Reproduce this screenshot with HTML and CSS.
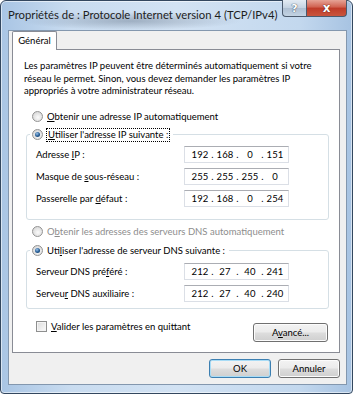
FILE: index.html
```html
<html>

<head>
  <meta charset="utf-8">
  <meta name="viewport" content="width=device-width, initial-scale=1">
  <link rel="stylesheet" href="styles.css">
</head>

<body>
  <div class="window">
    <div class="titlebar">
      <span class="title">Propriétés de : Protocole Internet version 4 (TCP/IPv4)</span>
      <div class="caption">
        <span class="cap-btn help">?</span>
        <span class="cap-btn close">x</span>
      </div>
    </div>

    <div class="client">
      <div class="tabs"><span class="tab">Général</span></div>

      <div class="panel">
        <p class="intro">Les paramètres IP peuvent être déterminés automatiquement si votre<br>
          réseau le permet. Sinon, vous devez demander les paramètres IP<br>
          appropriés à votre administrateur réseau.</p>

        <div class="option first"><span class="radio"></span><span><u>O</u>btenir une adresse IP automatiquement</span></div>

        <fieldset class="group group-ip">
          <legend class="option"><span class="radio on"></span><span class="focus"><u>U</u>tiliser l'adresse IP suivante :</span></legend>
          <div class="fields">
            <span>Adresse <u>I</u>P :</span>
            <span class="ip"><span>192</span><i>.</i><span>168</span><i>.</i><span>0</span><i>.</i><span>151</span></span>
            <span>Masque de <u>s</u>ous-réseau :</span>
            <span class="ip"><span>255</span><i>.</i><span>255</span><i>.</i><span>255</span><i>.</i><span>0</span></span>
            <span>Passerelle par <u>d</u>éfaut :</span>
            <span class="ip"><span>192</span><i>.</i><span>168</span><i>.</i><span>0</span><i>.</i><span>254</span></span>
          </div>
        </fieldset>

        <div class="option disabled"><span class="radio"></span><span>O<u>b</u>tenir les adresses des serveurs DNS automatiquement</span></div>

        <fieldset class="group group-dns">
          <legend class="option"><span class="radio on"></span><span>Uti<u>l</u>iser l'adresse de serveur DNS suivante :</span></legend>
          <div class="fields">
            <span>Serveur DNS pré<u>f</u>éré :</span>
            <span class="ip"><span>212</span><i>.</i><span>27</span><i>.</i><span>40</span><i>.</i><span>241</span></span>
            <span>Serveu<u>r</u> DNS auxiliaire :</span>
            <span class="ip"><span>212</span><i>.</i><span>27</span><i>.</i><span>40</span><i>.</i><span>240</span></span>
          </div>
        </fieldset>

        <div class="panel-foot">
          <div class="option check-row"><span class="checkbox"></span><span><u>V</u>alider les paramètres en quittant</span></div>
          <button class="btn advanced">A<u>v</u>ancé...</button>
        </div>
      </div>

      <div class="actions">
        <button class="btn default">OK</button>
        <button class="btn">Annuler</button>
      </div>
    </div>
  </div>
</body>

</html>
```

FILE: styles.css
```css
  body {
    margin: 0;
    background: #ffffff;
    color: #000000;
    font-family: "Lato", "Open Sans", sans-serif;
    font-size: 9.5px;
  }

  u {
    text-decoration-thickness: 1px;
    text-underline-offset: 1px;
  }

  /* window frame */
  .window {
    width: 353px;
    height: 394px;
    box-sizing: border-box;
    border: 1px solid #33475f;
    border-radius: 6px 6px 4px 4px;
    padding: 0 5px 8px 7px;
    display: flex;
    flex-direction: column;
    background:
      radial-gradient(ellipse 110px 9px at 130px 20px, rgba(70, 85, 105, 0.35), transparent),
      linear-gradient(to right, #a9c5e4, #c9dcf0 20%, #d2e2f3 50%, #c3d8ee 85%, #a7c3e2);
    box-shadow: inset 0 0 0 1px rgba(255, 255, 255, 0.55);
  }

  .titlebar {
    height: 29px;
    display: flex;
    justify-content: space-between;
    align-items: flex-start;
  }

  .title {
    margin-top: 7px;
    font-size: 11.3px;
    line-height: 14px;
    color: #1e1e1e;
  }

  .caption {
    display: flex;
    margin-top: -1px;
  }

  .cap-btn {
    height: 17px;
    box-sizing: border-box;
    border: 1px solid #4b5a6d;
    border-top: none;
    display: flex;
    align-items: center;
    justify-content: center;
    color: #ffffff;
    font-family: "DejaVu Sans", sans-serif;
    font-weight: bold;
  }

  .help {
    width: 24px;
    border-radius: 0 0 0 4px;
    border-right: none;
    font-size: 11px;
    background: linear-gradient(to bottom, #e3ebf3, #c4d2e1 50%, #aebfd2 51%, #c3d3e3);
    text-shadow: 0 0 1px #3b4a5c, 0 0 1px #3b4a5c;
  }

  .close {
    width: 41px;
    border-radius: 0 0 4px 0;
    font-size: 12px;
    background: linear-gradient(to bottom, #e6a396, #d0604f 45%, #bf3a28 50%, #c9553d);
    text-shadow: 0 0 1px #5a1a10, 0 0 1px #5a1a10;
  }

  /* dialog body */
  .client {
    flex: 1;
    background: #f0f0f0;
    border: 1px solid #8397ae;
    padding: 0 6px 0 3px;
    display: flex;
    flex-direction: column;
  }

  .tabs {
    display: flex;
    height: 18px;
  }

  .tab {
    position: relative;
    z-index: 1;
    width: 45px;
    height: 19px;
    box-sizing: border-box;
    border: 1px solid #898c95;
    border-bottom: none;
    border-radius: 2px 2px 0 0;
    background: #ffffff;
    text-align: center;
    line-height: 18px;
  }

  .panel {
    height: 304px;
    box-sizing: border-box;
    border: 1px solid #898c95;
    background: #ffffff;
    padding: 0 10px 0 11px;
  }

  .intro {
    margin: 10px 0 0;
    line-height: 12.5px;
  }

  .option {
    display: flex;
    align-items: center;
    gap: 4px;
    height: 14px;
  }

  .option.first {
    margin: 12px 0 0 8px;
  }

  .option.disabled {
    margin: 5px 0 0 8px;
    color: #8d8d8d;
  }

  .radio {
    width: 11px;
    height: 11px;
    box-sizing: border-box;
    border-radius: 50%;
    border: 1px solid #939393;
    background: radial-gradient(circle at 55% 60%, #fbfbfb, #d7d7d7 80%);
    display: flex;
    align-items: center;
    justify-content: center;
  }

  .radio.on::after {
    content: "";
    width: 5px;
    height: 5px;
    border-radius: 50%;
    background: radial-gradient(circle at 40% 35%, #9cc3ea, #235a92 55%, #0f365f);
  }

  .focus {
    outline: 1px dotted #000000;
    outline-offset: 0;
    padding: 0 1px;
    line-height: 12px;
  }

  .group {
    margin: 4px 0 0 2px;
    border: 1px solid #d5dfe5;
    border-radius: 3px;
    padding: 4px 0 12px 9px;
  }

  .group-dns {
    margin-top: 5px;
    padding: 5px 0 6px 9px;
  }

  .group legend {
    margin-left: -6px;
    padding: 0 4px 0 2px;
  }

  .fields {
    display: grid;
    grid-template-columns: 148px 105px;
    grid-auto-rows: 17px;
    row-gap: 5px;
    align-items: center;
  }

  .ip {
    height: 17px;
    box-sizing: border-box;
    border: 1px solid #dbdfe6;
    border-top-color: #abadb3;
    padding-left: 5px;
    display: flex;
    align-items: center;
    letter-spacing: 0.2px;
  }

  .ip span {
    width: 20px;
    text-align: center;
  }

  .ip i {
    width: 5px;
    font-style: normal;
    text-align: center;
  }

  .panel-foot {
    margin: 11px 0 0;
    display: flex;
    justify-content: space-between;
    align-items: flex-start;
  }

  .check-row {
    margin-left: 12px;
  }

  .checkbox {
    width: 11px;
    height: 11px;
    box-sizing: border-box;
    border: 1px solid #8e8f8f;
    background: linear-gradient(135deg, #dcdcdc, #fafafa);
    box-shadow: inset 0 0 0 1px #f4f4f4;
  }

  /* buttons */
  .btn {
    height: 19px;
    box-sizing: border-box;
    border: 1px solid #707070;
    border-radius: 3px;
    background: linear-gradient(to bottom, #f3f3f3, #ebebeb 48%, #dddddd 52%, #cfcfcf);
    box-shadow: inset 0 0 0 1px #fcfcfc;
    font-family: inherit;
    font-size: 9.5px;
    color: #000000;
    padding: 0;
  }

  .advanced {
    width: 75px;
    margin: 3px 1px 0 0;
  }

  .actions {
    display: flex;
    justify-content: flex-end;
    gap: 7px;
    margin-top: 6px;
  }

  .actions .btn {
    width: 62px;
  }

  .btn.default {
    border-color: #3c7fb1;
    box-shadow: inset 0 0 0 1px #a8dcf6;
  }
```
